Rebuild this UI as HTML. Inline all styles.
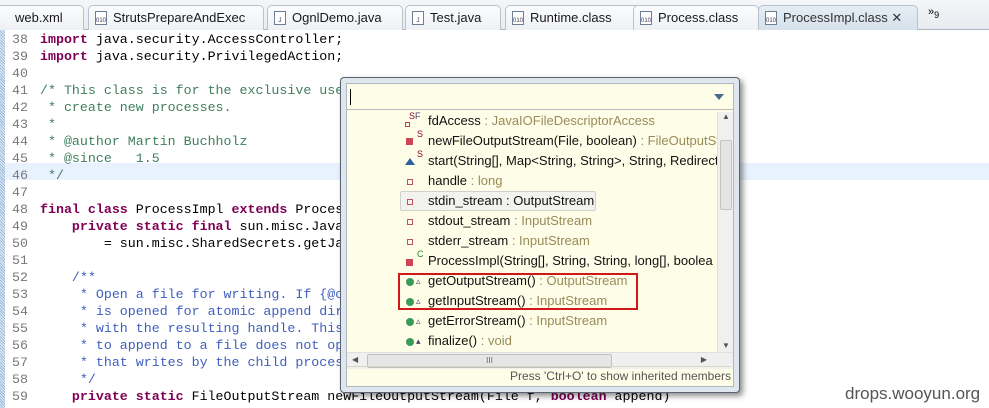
<!DOCTYPE html>
<html><head><meta charset="utf-8"><style>
*{margin:0;padding:0;box-sizing:border-box}
body{width:989px;height:408px;overflow:hidden;background:#fff;position:relative;font-family:"Liberation Sans",sans-serif}
.tabs{position:absolute;left:0;top:0;width:989px;height:30px;background:linear-gradient(#f4f6f8,#e8ecf0);border-bottom:1px solid #a9b6c4}
.tab{position:absolute;top:5px;height:25px;border:1px solid #b8c2cc;border-bottom:none;border-radius:5px 5px 0 0;background:linear-gradient(#fbfcfd,#eef1f4);font-size:13px;color:#1a1a1a;line-height:24px;padding-left:24px}
.tab i{position:absolute;left:6px;top:5px;width:12px;height:14px;border:1px solid #6a7f95;background:#fff;font-size:6px;line-height:18px;font-style:normal;color:#335;text-align:center}
.tab.act{background:linear-gradient(#e6edf4,#d6e1ec);color:#333}
.gut{position:absolute;left:0;top:30px;width:5px;height:378px;background:repeating-linear-gradient(45deg,#9cb8d8 0 1px,#e4edf7 1px 2px)}
.hl{position:absolute;left:5px;top:163px;width:984px;height:17px;background:#e8f2fe}
.code{position:absolute;left:0;top:31px;font-family:"Liberation Mono",monospace;font-size:13.3px;line-height:17px;white-space:pre;color:#000}
.ln{display:inline-block;width:40px;padding-left:12px;color:#787878}
.k{color:#7f0055;font-weight:bold}
.c{color:#3f7f5f}
.d{color:#3f5fbf}
.pop{position:absolute;left:340px;top:77px;width:400px;height:316px;border:1px solid #5a6470;border-radius:4px;background:#dfe6ee;box-shadow:3px 3px 6px rgba(0,0,0,.45);padding:4px}
.inn{position:absolute;left:5px;top:5px;right:5px;bottom:5px;background:#fefee8;border:1px solid #b0b8c0}
.inp{position:absolute;left:0;top:0;right:0;height:26px;border-bottom:1px solid #b8bcc0}
.inp:before{content:"";position:absolute;left:3px;top:5px;width:1px;height:16px;background:#000}
.inp:after{content:"";position:absolute;right:9px;top:10px;border:5px solid transparent;border-top:6px solid #4a6a88;border-bottom:0}
.it{position:absolute;left:81px;font-size:13px;line-height:18px;color:#111;white-space:nowrap;width:290px;overflow:hidden}
.it s{text-decoration:none;color:#9a8a5a}
.sq{width:6px;height:6px;border:1.5px solid #c04050;background:#fff}
.rq{width:7px;height:7px;background:#d04555}
.gc{width:8px;height:8px;border-radius:50%;background:#3a9a5a}
.vs{position:absolute;right:0;top:28px;width:16px;height:240px;background:#f0f0f0;border-left:1px solid #e0e0e0}
.hs{position:absolute;left:0;right:0;top:268px;height:17px;background:#f0f0f0;border-top:1px solid #e0e0e0}
.st{position:absolute;right:2px;bottom:0;height:20px;left:0;border-top:1px solid #d8d8c8;font-size:12px;color:#555;text-align:right;line-height:19px}
</style></head><body>
<div class="tabs">
<div class="tab" style="left:-6px;width:90px;padding-left:20px">web.xml</div>
<div class="tab" style="left:88px;width:176px"><i>010</i>StrutsPrepareAndExec</div>
<div class="tab" style="left:267px;width:136px"><i>J</i>OgnlDemo.java</div>
<div class="tab" style="left:405px;width:96px"><i>J</i>Test.java</div>
<div class="tab" style="left:505px;width:135px"><i>010</i>Runtime.class</div>
<div class="tab" style="left:633px;width:126px"><i>010</i>Process.class</div>
<div class="tab act" style="left:758px;width:160px"><i>010</i>ProcessImpl.class ✕</div>
<div style="position:absolute;left:928px;top:6px;font-size:11px;color:#000">»<sub style="font-size:9px">9</sub></div>
</div>
<div class="gut"></div>
<div class="hl"></div>
<div class="code"><span class="ln">38</span><span class="k">import</span> java.security.AccessController;
<span class="ln">39</span><span class="k">import</span> java.security.PrivilegedAction;
<span class="ln">40</span>
<span class="ln">41</span><span class="c">/* This class is for the exclusive use</span>
<span class="ln">42</span><span class="c"> * create new processes.</span>
<span class="ln">43</span><span class="c"> *</span>
<span class="ln">44</span><span class="c"> * @author Martin Buchholz</span>
<span class="ln">45</span><span class="c"> * @since   1.5</span>
<span class="ln">46</span><span class="c"> */</span>
<span class="ln">47</span>
<span class="ln">48</span><span class="k">final class</span> ProcessImpl <span class="k">extends</span> Process
<span class="ln">49</span>    <span class="k">private static final</span> sun.misc.Java
<span class="ln">50</span>        = sun.misc.SharedSecrets.getJa
<span class="ln">51</span>
<span class="ln">52</span>    <span class="d">/**</span>
<span class="ln">53</span><span class="d">     * Open a file for writing. If {@c</span>
<span class="ln">54</span><span class="d">     * is opened for atomic append dir</span>
<span class="ln">55</span><span class="d">     * with the resulting handle. This</span>
<span class="ln">56</span><span class="d">     * to append to a file does not op</span>
<span class="ln">57</span><span class="d">     * that writes by the child proces</span>
<span class="ln">58</span><span class="d">     */</span>
<span class="ln">59</span>    <span class="k">private static</span> FileOutputStream newFileOutputStream(File f, <span class="k">boolean</span> append)</div>
<div class="pop"><div class="inn">
<div class="inp"></div>
<div style="position:absolute;left:53px;top:107px;width:196px;height:20px;border:1px solid #d0d0d0;border-radius:2px;background:#f2f2ee"></div>
<div class="it" style="top:28px">fdAccess <s>: JavaIOFileDescriptorAccess</s></div>
<div class="it" style="top:48px">newFileOutputStream(File, boolean) <s>: FileOutputStream</s></div>
<div class="it" style="top:68px">start(String[], Map&lt;String, String&gt;, String, Redirect</div>
<div class="it" style="top:88px">handle <s>: long</s></div>
<div class="it" style="top:108px">stdin_stream : OutputStream</div>
<div class="it" style="top:128px">stdout_stream <s>: InputStream</s></div>
<div class="it" style="top:148px">stderr_stream <s>: InputStream</s></div>
<div class="it" style="top:168px">ProcessImpl(String[], String, String, long[], boolea</div>
<div class="it" style="top:188px">getOutputStream() <s>: OutputStream</s></div>
<div class="it" style="top:208px">getInputStream() <s>: InputStream</s></div>
<div class="it" style="top:228px">getErrorStream() <s>: InputStream</s></div>
<div class="it" style="top:248px">finalize() <s>: void</s></div>
<div style="position:absolute;left:58px;top:38px;width:5px;height:5px;border:1.5px solid #c04050"></div><span style="position:absolute;left:62px;top:27px;font-size:9px;color:#803">S<span style="color:#446">F</span></span>
<div style="position:absolute;left:59px;top:54px" class="rq"></div><span style="position:absolute;left:70px;top:45px;font-size:9px;color:#803">S</span>
<div style="position:absolute;left:58px;top:74px;border:5px solid transparent;border-bottom:7px solid #3060a0;border-top:0"></div><span style="position:absolute;left:70px;top:65px;font-size:9px;color:#803">S</span>
<div style="position:absolute;left:60px;top:95px;width:6px;height:6px;border:1.5px solid #c05060"></div>
<div style="position:absolute;left:60px;top:115px;width:6px;height:6px;border:1.5px solid #c05060"></div>
<div style="position:absolute;left:60px;top:135px;width:6px;height:6px;border:1.5px solid #c05060"></div>
<div style="position:absolute;left:60px;top:155px;width:6px;height:6px;border:1.5px solid #c05060"></div>
<div style="position:absolute;left:59px;top:175px" class="rq"></div><span style="position:absolute;left:70px;top:165px;font-size:9px;color:#283">C</span>
<div style="position:absolute;left:59px;top:194px" class="gc"></div><span style="position:absolute;left:69px;top:192px;font-size:9px;color:#446">▵</span>
<div style="position:absolute;left:59px;top:214px" class="gc"></div><span style="position:absolute;left:69px;top:212px;font-size:9px;color:#446">▵</span>
<div style="position:absolute;left:59px;top:234px" class="gc"></div><span style="position:absolute;left:69px;top:232px;font-size:9px;color:#446">▵</span>
<div style="position:absolute;left:59px;top:254px" class="gc"></div><span style="position:absolute;left:69px;top:252px;font-size:9px;color:#446">▴</span>
<div style="position:absolute;left:51px;top:189px;width:240px;height:37px;border:2px solid #d01818"></div>
<div class="vs"><div style="position:absolute;left:2px;top:28px;width:12px;height:70px;background:#e4e4e4;border:1px solid #c4c4c4;border-radius:2px"></div><span style="position:absolute;left:4px;top:0;font-size:8px;color:#555">▲</span><span style="position:absolute;left:4px;bottom:2px;font-size:8px;color:#555">▼</span></div>
<div class="hs"><div style="position:absolute;left:20px;top:1px;width:245px;height:14px;background:#e6e6e6;border:1px solid #c0c0c0;border-radius:2px;text-align:center;font-size:8px;line-height:12px;color:#666">III</div><span style="position:absolute;left:5px;top:2px;font-size:8px;color:#555">◀</span><span style="position:absolute;right:26px;top:2px;font-size:8px;color:#555">▶</span></div>
<div class="st">Press 'Ctrl+O' to show inherited members</div>
</div></div>
<div style="position:absolute;left:845px;top:384px;font-size:17px;color:#555;font-family:'Liberation Sans',sans-serif">drops.wooyun.org</div>
</body></html>
